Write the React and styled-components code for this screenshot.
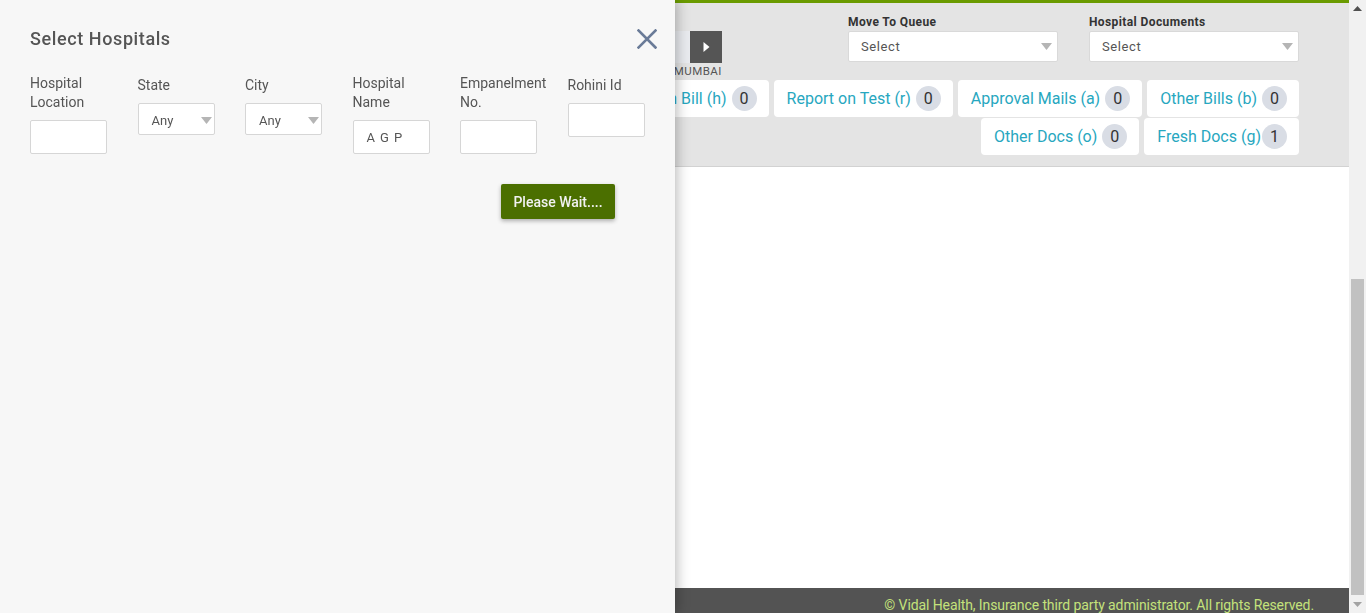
import React from 'react'
import styled, { createGlobalStyle } from 'styled-components'

const GlobalStyle = createGlobalStyle`
  html, body {
    margin: 0;
    padding: 0;
    height: 613px;
    overflow: hidden;
    font-family: Roboto, "Liberation Sans", Arial, sans-serif;
  }
  * { box-sizing: border-box; }
`;

const firstRowTabs = [
    { label: 'Main Bill (h)', count: 0 },
    { label: 'Report on Test (r)', count: 0 },
    { label: 'Approval Mails (a)', count: 0 },
    { label: 'Other Bills (b)', count: 0 },
];

const secondRowTabs = [
    { label: 'Other Docs (o)', count: 0 },
    { label: 'Fresh Docs (g)', count: 1, tight: true },
];

const fields = [
    { label: ['Hospital', 'Location'], kind: 'input' },
    { label: ['State'], kind: 'select' },
    { label: ['City'], kind: 'select' },
    { label: ['Hospital', 'Name'], kind: 'input', value: 'A G P' },
    { label: ['Empanelment', 'No.'], kind: 'input' },
    { label: ['Rohini Id'], kind: 'input' },
];

function Caret() {
    return (
        <svg width="11" height="7" viewBox="0 0 11 7">
            <path d="M0 0 L11 0 L5.5 7 Z" fill="#b5b5b5" />
        </svg>
    );
}

function DocTab({ label, count, tight }) {
    return (
        <Tab $tight={tight}>
            <span>{label}</span>
            <Badge>{count}</Badge>
        </Tab>
    );
}

function App() {
    return (
        <>
            <GlobalStyle />
            <Page>
                <Main>
                    <TopBar />
                    <Header>
                        <ControlRow>
                            <Pager>
                                <PagerBox>
                                    <PagerInput />
                                    <PagerButton>
                                        <svg width="7" height="10" viewBox="0 0 7 10">
                                            <path d="M0.5 0 L6.5 5 L0.5 10 Z" fill="#fff" />
                                        </svg>
                                    </PagerButton>
                                </PagerBox>
                                <PagerCaption>MUMBAI</PagerCaption>
                            </Pager>
                            <Field>
                                <FieldLabel>Move To Queue</FieldLabel>
                                <HeaderSelect>
                                    <span>Select</span>
                                    <Caret />
                                </HeaderSelect>
                            </Field>
                            <Field>
                                <FieldLabel>Hospital Documents</FieldLabel>
                                <HeaderSelect>
                                    <span>Select</span>
                                    <Caret />
                                </HeaderSelect>
                            </Field>
                        </ControlRow>
                        <TabRow>
                            {firstRowTabs.map(t => <DocTab key={t.label} {...t} />)}
                        </TabRow>
                        <TabRow>
                            {secondRowTabs.map(t => <DocTab key={t.label} {...t} />)}
                        </TabRow>
                    </Header>
                    <Content />
                    <Footer>© Vidal Health, Insurance third party administrator. All rights Reserved.</Footer>
                </Main>
                <Scrollbar>
                    <ScrollArrow>
                        <svg width="9" height="5" viewBox="0 0 9 5"><path d="M0 5 L4.5 0 L9 5 Z" fill="#505050" /></svg>
                    </ScrollArrow>
                    <ScrollTrack>
                        <ScrollThumb />
                    </ScrollTrack>
                    <ScrollArrow>
                        <svg width="9" height="5" viewBox="0 0 9 5"><path d="M0 0 L9 0 L4.5 5 Z" fill="#a3a3a3" /></svg>
                    </ScrollArrow>
                </Scrollbar>
            </Page>

            <Drawer>
                <DrawerHead>
                    <Title>Select Hospitals</Title>
                    <CloseButton aria-label="close">
                        <svg width="20" height="20" viewBox="0 0 20 20">
                            <path d="M1.5 1.5 L18.5 18.5 M18.5 1.5 L1.5 18.5" stroke="#6a7b98" strokeWidth="2.6" strokeLinecap="square" />
                        </svg>
                    </CloseButton>
                </DrawerHead>
                <FormRow>
                    {fields.map((f, i) => (
                        <FormField key={i}>
                            <FormLabel $single={f.label.length === 1}>
                                {f.label.map((l, j) => <div key={j}>{l}</div>)}
                            </FormLabel>
                            {f.kind === 'select' ? (
                                <FormSelect>
                                    <span>Any</span>
                                    <Caret />
                                </FormSelect>
                            ) : (
                                <FormInput>{f.value}</FormInput>
                            )}
                        </FormField>
                    ))}
                </FormRow>
                <Actions>
                    <WaitButton>Please Wait....</WaitButton>
                </Actions>
            </Drawer>
        </>
    );
}

const Page = styled.div`
    display: flex;
    height: 613px;
    width: 1366px;
`;

const Main = styled.div`
    flex: 1;
    display: flex;
    flex-direction: column;
    min-width: 0;
`;

const TopBar = styled.div`
    height: 3px;
    background: #6a9b00;
`;

const Header = styled.div`
    height: 164px;
    background: #e4e4e4;
    border-bottom: 1px solid #d2d2d2;
    padding: 12px 50px 0 0;
    display: flex;
    flex-direction: column;
    overflow: hidden;
`;

const ControlRow = styled.div`
    display: flex;
    justify-content: flex-end;
    align-items: flex-start;
    gap: 31px;
    height: 65px;
`;

const Pager = styled.div`
    display: flex;
    flex-direction: column;
    align-items: flex-end;
    margin-right: 95px;
    padding-top: 16px;
`;

const PagerBox = styled.div`
    display: flex;
`;

const PagerInput = styled.div`
    width: 60px;
    height: 32px;
    background: #e9ebef;
`;

const PagerButton = styled.div`
    width: 32px;
    height: 32px;
    background: #555;
    display: flex;
    align-items: center;
    justify-content: center;
`;

const PagerCaption = styled.div`
    font-size: 11.5px;
    color: #555;
    letter-spacing: 0.5px;
    margin-top: 1px;
    line-height: 14px;
`;

const Field = styled.div`
    display: flex;
    flex-direction: column;
`;

const FieldLabel = styled.div`
    font-size: 12px;
    font-weight: 700;
    color: #333;
    letter-spacing: 0.4px;
    line-height: 14px;
    margin-bottom: 2px;
`;

const HeaderSelect = styled.div`
    width: 210px;
    height: 31px;
    background: #fff;
    border: 1px solid #d9d9d9;
    border-radius: 2px;
    display: flex;
    align-items: center;
    justify-content: space-between;
    padding: 0 5px 1px 12px;
    font-size: 13px;
    color: #555;
    letter-spacing: 0.6px;
`;

const TabRow = styled.div`
    display: flex;
    justify-content: flex-end;
    gap: 5px;
    margin-bottom: 1px;
    white-space: nowrap;
`;

const Tab = styled.div`
    flex-shrink: 0;
    height: 37px;
    background: #fff;
    border-radius: 4px;
    display: flex;
    align-items: center;
    gap: ${p => (p.$tight ? '1px' : '5px')};
    padding: 0 12px 0 13px;
    font-size: 16px;
    color: #27a7c0;
`;

const Badge = styled.span`
    width: 25px;
    height: 25px;
    border-radius: 50%;
    background: #d9dde5;
    color: #333;
    display: flex;
    align-items: center;
    justify-content: center;
    font-size: 16px;
`;

const Content = styled.div`
    flex: 1;
    background: #fff;
`;

const Footer = styled.div`
    height: 25px;
    background: #535353;
    color: #c4e27b;
    font-size: 14px;
    letter-spacing: -0.1px;
    display: flex;
    align-items: flex-end;
    justify-content: flex-end;
    padding: 0 35px 0 0;
    line-height: 16px;
`;

const Scrollbar = styled.div`
    width: 17px;
    display: flex;
    flex-direction: column;
    background: #f1f1f1;
`;

const ScrollArrow = styled.div`
    height: 17px;
    display: flex;
    align-items: center;
    justify-content: center;
`;

const ScrollTrack = styled.div`
    flex: 1;
    display: flex;
    flex-direction: column;
    justify-content: flex-end;
    padding: 0 2px 1px;
`;

const ScrollThumb = styled.div`
    height: 316px;
    background: #c1c1c1;
`;

const Drawer = styled.div`
    position: fixed;
    left: 0;
    top: 0;
    width: 675px;
    height: 613px;
    background: #f7f7f7;
    box-shadow: 2px 0 12px rgba(0, 0, 0, 0.28);
    padding: 26px 18px 0 30px;
    display: flex;
    flex-direction: column;
`;

const DrawerHead = styled.div`
    display: flex;
    justify-content: space-between;
    align-items: center;
    height: 26px;
`;

const Title = styled.h2`
    margin: 0;
    font-size: 18px;
    font-weight: 500;
    color: #555;
    letter-spacing: 0.6px;
    line-height: 24px;
`;

const CloseButton = styled.div`
    width: 20px;
    height: 20px;
    display: flex;
`;

const FormRow = styled.div`
    display: flex;
    gap: 30.5px;
    margin-top: 22px;
`;

const FormField = styled.div`
    width: 77px;
    display: flex;
    flex-direction: column;
`;

const FormLabel = styled.div`
    font-size: 14px;
    line-height: 19px;
    color: #555;
    margin-top: ${p => (p.$single ? '2px' : '0')};
    margin-bottom: 8px;
    white-space: nowrap;
`;

const FormInput = styled.div`
    height: 34px;
    background: #fff;
    border: 1px solid #d6d6d6;
    border-radius: 2px;
    display: flex;
    align-items: center;
    padding: 0 13px;
    font-size: 13px;
    color: #555;
    letter-spacing: 0.9px;
`;

const FormSelect = styled.div`
    height: 32px;
    background: #fff;
    border: 1px solid #d6d6d6;
    border-radius: 2px;
    display: flex;
    align-items: center;
    justify-content: space-between;
    padding: 2px 2px 0 13px;
    font-size: 13px;
    color: #555;
`;

const Actions = styled.div`
    display: flex;
    justify-content: flex-end;
    padding-right: 42px;
    margin-top: 30px;
`;

const WaitButton = styled.div`
    width: 114px;
    height: 35px;
    background: #4b6f00;
    color: #f2f2f2;
    border-radius: 2px;
    box-shadow: 0 2px 4px rgba(0, 0, 0, 0.3);
    display: flex;
    align-items: center;
    justify-content: center;
    font-size: 14px;
    font-weight: 500;
`;

export default App
